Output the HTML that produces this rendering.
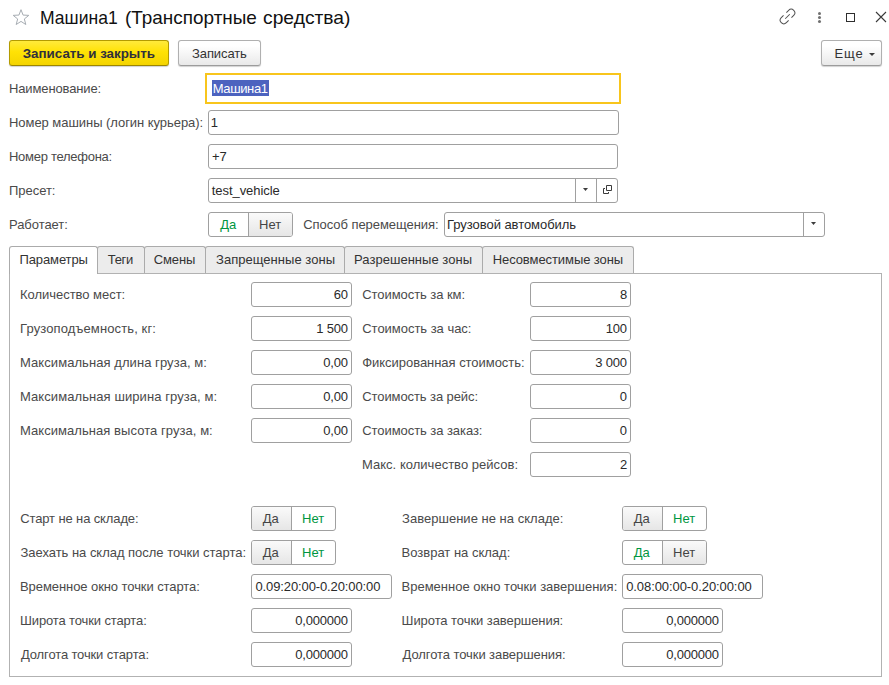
<!DOCTYPE html>
<html lang="ru">
<head>
<meta charset="utf-8">
<title>Машина1 (Транспортные средства)</title>
<style>
html,body{margin:0;padding:0;}
body{width:889px;height:685px;position:relative;overflow:hidden;background:#fff;font-family:"Liberation Sans",sans-serif;font-size:13px;color:#4a4a4a;}
.a{position:absolute;white-space:nowrap;}
.t{position:absolute;white-space:nowrap;height:24px;line-height:26px;}
.lbl{color:#4a4a4a;}
.val{color:#2a2a2a;}
.inp{position:absolute;box-sizing:border-box;height:25px;border:1px solid #a0a0a0;border-radius:3px;background:#fff;}
.btn{position:absolute;box-sizing:border-box;height:26px;border:1px solid #b0b0b0;border-bottom-color:#9c9c9c;border-radius:3px;background:linear-gradient(#ffffff 20%,#e9e9e9);box-shadow:0 1px 1px rgba(0,0,0,.18);}
.bt{color:#333;line-height:28px;height:26px;}
.tg{position:absolute;box-sizing:border-box;width:85px;height:25px;border:1px solid #a0a0a0;border-radius:3px;background:#fff;}
.tg i{position:absolute;top:0;height:23px;display:block;}
.tg .off{background:linear-gradient(#fafafa,#e6e6e6);}
.tg .dv{left:39px;width:1px;background:#a0a0a0;}
.on{color:#00963f;}
.offt{color:#444;}
.tab{position:absolute;box-sizing:border-box;top:246px;height:27px;border:1px solid #ababab;border-bottom:none;border-radius:3px 3px 0 0;background:#ececec;}
.tab.act{background:#fff;height:28px;}
.tt{color:#333;}
.ar{position:absolute;width:0;height:0;border-left:3px solid transparent;border-right:3px solid transparent;border-top:3px solid #3c3c3c;}
.dv{position:absolute;width:1px;height:23px;background:#a0a0a0;}
.ttl{font-size:18.6px;line-height:24px;color:#111;height:24px;}
</style>
</head>
<body>
<svg class="a" style="left:0;top:0" width="40" height="36" viewBox="0 0 40 36"><polygon points="21.00,9.70 23.06,15.07 28.80,15.37 24.33,18.98 25.82,24.53 21.00,21.40 16.18,24.53 17.67,18.98 13.20,15.37 18.94,15.07" fill="none" stroke="#a7adb3" stroke-width="1"/></svg>
<div class="a" style="left:0;top:0;width:400px;height:36px">
<div class="t ttl" id="t0" style="left:39.8px;top:6px;transform:scaleX(0.9438);transform-origin:0 0;">Машина1</div>
<div class="t ttl" id="t1" style="left:125.2px;top:6px;transform:scaleX(1.0176);transform-origin:0 0;">(Транспортные</div>
<div class="t ttl" id="t2" style="left:263px;top:6px;transform:scaleX(1.0364);transform-origin:0 0;">средства)</div>
</div>
<svg class="a" style="left:770px;top:0" width="40" height="34" viewBox="770 0 40 34"><g transform="translate(787.5,16.5) rotate(-45)" fill="none" stroke="#4f4f4f" stroke-width="1" stroke-linecap="butt"><path d="M2 -3.6H5.2A3.6 3.6 0 0 1 5.2 3.6H2"/><path d="M-2 -3.6H-5.2A3.6 3.6 0 0 0 -5.2 3.6H-2"/><path d="M-3.2 0H3.2"/></g></svg>
<div class="a" style="left:818px;top:12px;width:3px;height:3px;background:#707070;border-radius:50%;box-shadow:0 4px 0 #707070,0 8px 0 #707070;"></div>
<div class="a" style="left:846px;top:13px;width:7px;height:7px;border:1px solid #2e2e2e;"></div>
<svg class="a" style="left:874px;top:10px" width="14" height="14" viewBox="0 0 14 14" stroke="#3a3a3a" stroke-width="1.1"><path d="M2 2l10 10M12 2L2 12"/></svg>
<div class="btn" style="left:9px;top:40px;width:160px;background:linear-gradient(#ffea3c,#ffe205 45%,#f4d400);border-color:#b39b00;border-bottom-color:#9c8600;"></div>
<div class="t bt" id="t3" style="left:22.75px;top:40px;letter-spacing:-0.026px;font-weight:bold;color:#30303c;font-size:13.4px;">Записать и закрыть</div>
<div class="btn" style="left:178px;top:40px;width:83px;"></div>
<div class="t bt" id="t4" style="left:192px;top:40px;letter-spacing:-0.096px;">Записать</div>
<div class="btn" style="left:821px;top:40px;width:61px;"></div>
<div class="t bt" id="t5" style="left:834.5px;top:40px;letter-spacing:0.9px;">Еще</div>
<svg class="a" style="left:869px;top:53px" width="8" height="4" viewBox="0 0 8 4"><polygon points="0,0 6,0 3,3" fill="#3c3c3c"/></svg>
<div class="t lbl" id="t6" style="left:9px;top:76px;letter-spacing:-0.131px;">Наименование:</div>
<div class="a" style="left:205px;top:73px;width:416px;height:31px;box-sizing:border-box;border:2px solid #f8c51c;background:#fff;"></div>
<div class="a" style="left:212px;top:80px;width:57px;height:16px;background:#4c63bf;"></div>
<div class="t val" id="t7" style="left:212.7px;top:76px;letter-spacing:-0.375px;color:#fff;">Машина1</div>
<div class="t lbl" id="t8" style="left:9px;top:110px;letter-spacing:-0.048px;">Номер машины (логин курьера):</div>
<div class="inp" style="left:208px;top:110px;width:411px;"></div>
<div class="t val" id="t9" style="left:210.75px;top:110px;">1</div>
<div class="t lbl" id="t10" style="left:9px;top:144px;letter-spacing:-0.273px;">Номер телефона:</div>
<div class="inp" style="left:208px;top:144px;width:410px;"></div>
<div class="t val" id="t11" style="left:211.88px;top:144px;">+7</div>
<div class="t lbl" id="t12" style="left:9px;top:178px;letter-spacing:-0.038px;">Пресет:</div>
<div class="inp" style="left:208px;top:178px;width:410px;"></div>
<div class="t val" id="t13" style="left:211.75px;top:178px;letter-spacing:-0.061px;">test_vehicle</div>
<div class="dv" style="left:575px;top:179px;"></div><div class="dv" style="left:596px;top:179px;"></div>
<svg class="a" style="left:583px;top:188px" width="8" height="4" viewBox="0 0 8 4"><polygon points="0,0 5,0 2.5,3" fill="#3c3c3c"/></svg>
<svg class="a" style="left:600px;top:182px" width="16" height="16" viewBox="600 182 16 16" fill="none" stroke="#3c3c3c" stroke-width="1"><path d="M606.5 185.5h5v5h-5z"/><path d="M605 188.5H603.5V193.500H608.5V192"/></svg>
<div class="t lbl" id="t14" style="left:9px;top:212px;letter-spacing:-0.056px;">Работает:</div>
<div class="tg" style="left:208px;top:212px;"><i style="left:0;width:39px;border-radius:2px 0 0 2px" class=""></i><i class="dv"></i><i style="left:40px;width:43px;border-radius:0 2px 2px 0" class="off"></i></div>
<div class="t on" id="t15" style="left:220.25px;top:212px;">Да</div>
<div class="t offt" id="t16" style="left:259.12px;top:212px;">Нет</div>
<div class="t lbl" id="t17" style="left:303.2px;top:212px;letter-spacing:-0.05px;">Способ перемещения:</div>
<div class="inp" style="left:444px;top:212px;width:381px;"></div>
<div class="t val" id="t18" style="left:447.05px;top:212px;letter-spacing:-0.05px;">Грузовой автомобиль</div>
<div class="dv" style="left:803px;top:213px;"></div>
<svg class="a" style="left:811px;top:222px" width="8" height="4" viewBox="0 0 8 4"><polygon points="0,0 5,0 2.5,3" fill="#3c3c3c"/></svg>
<div class="a" style="left:9px;top:273px;width:873px;height:404px;box-sizing:border-box;border:1px solid #b2b2b2;background:#fff;"></div>
<div class="tab" style="left:97px;width:48px;"></div>
<div class="tab" style="left:144px;width:62px;"></div>
<div class="tab" style="left:205px;width:140px;"></div>
<div class="tab" style="left:344px;width:139px;"></div>
<div class="tab" style="left:482px;width:152px;"></div>
<div class="tab act" style="left:9px;width:89px;"></div>
<div class="t tt" id="t19" style="left:19.5px;top:247px;letter-spacing:-0.112px;">Параметры</div>
<div class="t tt" id="t20" style="left:107.75px;top:247px;letter-spacing:-0.3px;">Теги</div>
<div class="t tt" id="t21" style="left:153.75px;top:247px;letter-spacing:-0.112px;">Смены</div>
<div class="t tt" id="t22" style="left:216.05px;top:247px;letter-spacing:0.03px;">Запрещенные зоны</div>
<div class="t tt" id="t23" style="left:354.05px;top:247px;letter-spacing:0.03px;">Разрешенные зоны</div>
<div class="t tt" id="t24" style="left:492.7px;top:247px;letter-spacing:-0.079px;">Несовместимые зоны</div>
<div class="t lbl" id="t25" style="left:20px;top:282px;letter-spacing:-0.03px;">Количество мест:</div>
<div class="inp" style="left:251px;top:282px;width:101px;"></div>
<div class="t val" id="t26" style="left:333.75px;top:282px;letter-spacing:-0.2px;">60</div>
<div class="t lbl" id="t27" style="left:20px;top:316px;letter-spacing:0.124px;">Грузоподъемность, кг:</div>
<div class="inp" style="left:251px;top:316px;width:101px;"></div>
<div class="t val" id="t28" style="left:316.25px;top:316px;letter-spacing:-0.2px;">1 500</div>
<div class="t lbl" id="t29" style="left:20px;top:350px;letter-spacing:0.067px;">Максимальная длина груза, м:</div>
<div class="inp" style="left:251px;top:350px;width:101px;"></div>
<div class="t val" id="t30" style="left:323.25px;top:350px;letter-spacing:-0.2px;">0,00</div>
<div class="t lbl" id="t31" style="left:20px;top:384px;letter-spacing:0.08px;">Максимальная ширина груза, м:</div>
<div class="inp" style="left:251px;top:384px;width:101px;"></div>
<div class="t val" id="t32" style="left:323.25px;top:384px;letter-spacing:-0.2px;">0,00</div>
<div class="t lbl" id="t33" style="left:20px;top:418px;letter-spacing:0.056px;">Максимальная высота груза, м:</div>
<div class="inp" style="left:251px;top:418px;width:101px;"></div>
<div class="t val" id="t34" style="left:323.25px;top:418px;letter-spacing:-0.2px;">0,00</div>
<div class="t lbl" id="t35" style="left:362.25px;top:282px;letter-spacing:-0.06px;">Стоимость за км:</div>
<div class="inp" style="left:530px;top:282px;width:101px;"></div>
<div class="t val" id="t36" style="left:620px;top:282px;">8</div>
<div class="t lbl" id="t37" style="left:362.25px;top:316px;letter-spacing:-0.028px;">Стоимость за час:</div>
<div class="inp" style="left:530px;top:316px;width:101px;"></div>
<div class="t val" id="t38" style="left:605.75px;top:316px;letter-spacing:-0.2px;">100</div>
<div class="t lbl" id="t39" style="left:362.25px;top:350px;letter-spacing:-0.039px;">Фиксированная стоимость:</div>
<div class="inp" style="left:530px;top:350px;width:101px;"></div>
<div class="t val" id="t40" style="left:595.25px;top:350px;letter-spacing:-0.2px;">3 000</div>
<div class="t lbl" id="t41" style="left:362.25px;top:384px;letter-spacing:-0.093px;">Стоимость за рейс:</div>
<div class="inp" style="left:530px;top:384px;width:101px;"></div>
<div class="t val" id="t42" style="left:619.75px;top:384px;">0</div>
<div class="t lbl" id="t43" style="left:362.25px;top:418px;letter-spacing:-0.063px;">Стоимость за заказ:</div>
<div class="inp" style="left:530px;top:418px;width:101px;"></div>
<div class="t val" id="t44" style="left:619.75px;top:418px;">0</div>
<div class="t lbl" id="t45" style="left:362px;top:452px;letter-spacing:0.02px;">Макс. количество рейсов:</div>
<div class="inp" style="left:530px;top:452px;width:101px;"></div>
<div class="t val" id="t46" style="left:620px;top:452px;">2</div>
<div class="t lbl" id="t47" style="left:20.25px;top:506px;letter-spacing:-0.125px;">Старт не на складе:</div>
<div class="tg" style="left:251px;top:506px;"><i style="left:0;width:39px;border-radius:2px 0 0 2px" class="off"></i><i class="dv"></i><i style="left:40px;width:43px;border-radius:0 2px 2px 0" class=""></i></div>
<div class="t offt" id="t48" style="left:262.75px;top:506px;">Да</div>
<div class="t on" id="t49" style="left:302.12px;top:506px;">Нет</div>
<div class="t lbl" id="t50" style="left:20.5px;top:540px;letter-spacing:-0.026px;">Заехать на склад после точки старта:</div>
<div class="tg" style="left:251px;top:540px;"><i style="left:0;width:39px;border-radius:2px 0 0 2px" class="off"></i><i class="dv"></i><i style="left:40px;width:43px;border-radius:0 2px 2px 0" class=""></i></div>
<div class="t offt" id="t51" style="left:262.75px;top:540px;">Да</div>
<div class="t on" id="t52" style="left:302.12px;top:540px;">Нет</div>
<div class="t lbl" id="t53" style="left:20px;top:574px;letter-spacing:-0.075px;">Временное окно точки старта:</div>
<div class="inp" style="left:251px;top:574px;width:141px;"></div>
<div class="t val" id="t54" style="left:255.45px;top:574px;letter-spacing:-0.113px;">0.09:20:00-0.20:00:00</div>
<div class="t lbl" id="t55" style="left:20px;top:608px;letter-spacing:-0.13px;">Широта точки старта:</div>
<div class="inp" style="left:251px;top:608px;width:101px;"></div>
<div class="t val" id="t56" style="left:295.25px;top:608px;letter-spacing:-0.2px;">0,000000</div>
<div class="t lbl" id="t57" style="left:21px;top:642px;letter-spacing:-0.135px;">Долгота точки старта:</div>
<div class="inp" style="left:251px;top:642px;width:101px;"></div>
<div class="t val" id="t58" style="left:295.25px;top:642px;letter-spacing:-0.2px;">0,000000</div>
<div class="t lbl" id="t59" style="left:402.05px;top:506px;letter-spacing:0.02px;">Завершение не на складе:</div>
<div class="tg" style="left:622px;top:506px;"><i style="left:0;width:39px;border-radius:2px 0 0 2px" class="off"></i><i class="dv"></i><i style="left:40px;width:43px;border-radius:0 2px 2px 0" class=""></i></div>
<div class="t offt" id="t60" style="left:633.75px;top:506px;">Да</div>
<div class="t on" id="t61" style="left:673.12px;top:506px;">Нет</div>
<div class="t lbl" id="t62" style="left:401.55px;top:540px;">Возврат на склад:</div>
<div class="tg" style="left:622px;top:540px;"><i style="left:0;width:39px;border-radius:2px 0 0 2px" class=""></i><i class="dv"></i><i style="left:40px;width:43px;border-radius:0 2px 2px 0" class="off"></i></div>
<div class="t on" id="t63" style="left:633.75px;top:540px;">Да</div>
<div class="t offt" id="t64" style="left:673.12px;top:540px;">Нет</div>
<div class="t lbl" id="t65" style="left:401.55px;top:574px;letter-spacing:-0.007px;">Временное окно точки завершения:</div>
<div class="inp" style="left:622px;top:574px;width:141px;"></div>
<div class="t val" id="t66" style="left:626.15px;top:574px;letter-spacing:-0.079px;">0.08:00:00-0.20:00:00</div>
<div class="t lbl" id="t67" style="left:401.55px;top:608px;letter-spacing:-0.068px;">Широта точки завершения:</div>
<div class="inp" style="left:622px;top:608px;width:101px;"></div>
<div class="t val" id="t68" style="left:666.25px;top:608px;letter-spacing:-0.2px;">0,000000</div>
<div class="t lbl" id="t69" style="left:402.55px;top:642px;letter-spacing:-0.075px;">Долгота точки завершения:</div>
<div class="inp" style="left:622px;top:642px;width:101px;"></div>
<div class="t val" id="t70" style="left:666.25px;top:642px;letter-spacing:-0.2px;">0,000000</div>
</body>
</html>
